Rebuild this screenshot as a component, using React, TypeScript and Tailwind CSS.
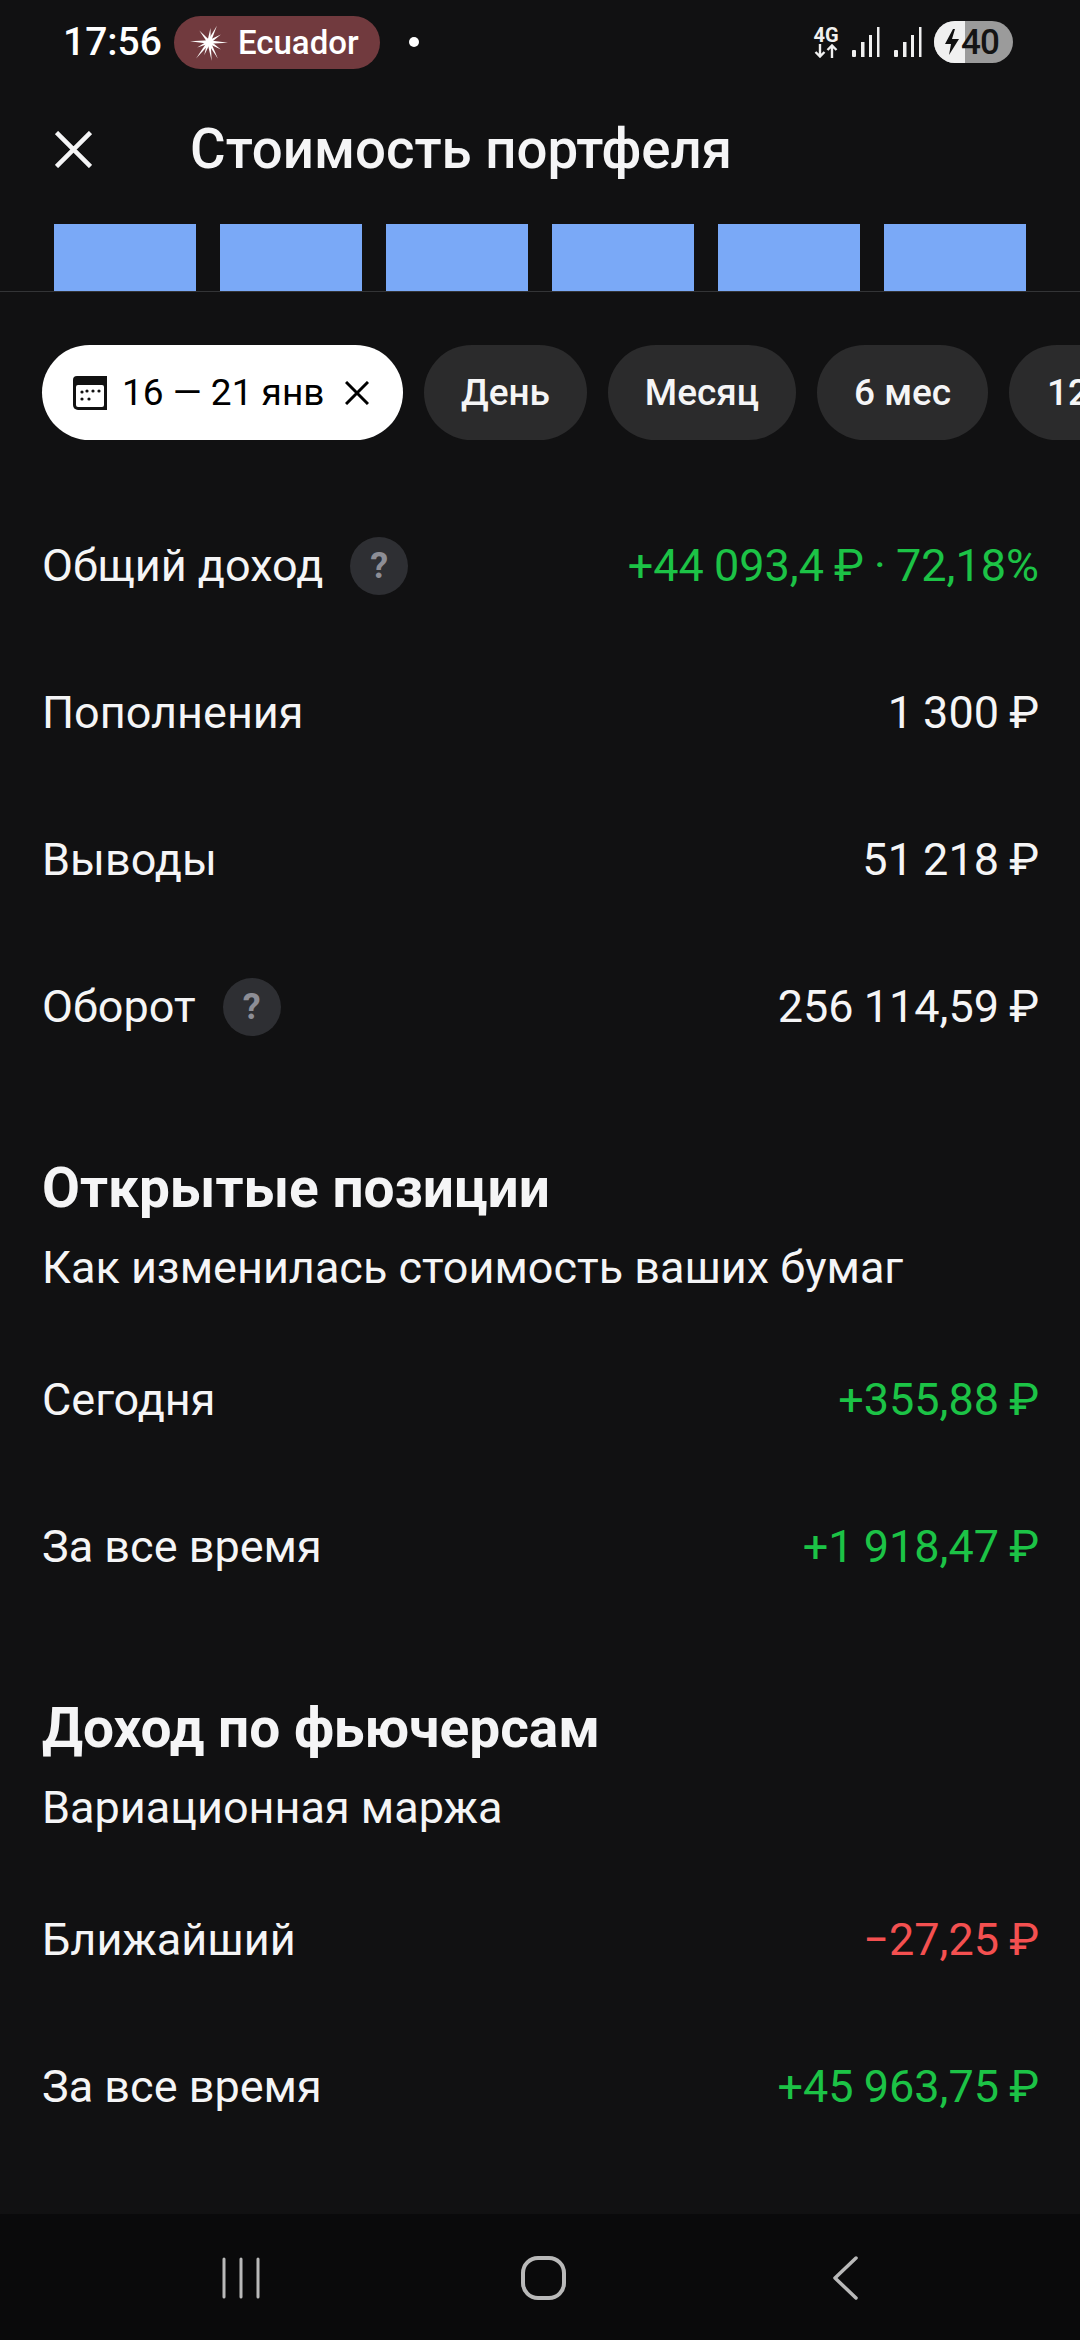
const rowsTop = [
  { label: "Общий доход", value: "+44 093,4 ₽ · 72,18%", color: "text-[#1cc346]", help: true },
  { label: "Пополнения", value: "1 300 ₽" },
  { label: "Выводы", value: "51 218 ₽" },
  { label: "Оборот", value: "256 114,59 ₽", help: true },
]

type RowProps = { label: string; value: string; color?: string; help?: boolean }

function Row({ label, value, color = "text-[#f5f5f6]", help }: RowProps) {
  return (
    <div className="flex h-[147px] items-center justify-between pl-[42px] pr-[41px] text-[45px] leading-none text-[#f5f5f6]">
      <div className="flex items-center gap-[27px]">
        <span>{label}</span>
        {help && (
          <span className="flex h-[58px] w-[58px] items-center justify-center rounded-full bg-[#2e2f33] text-[36px] font-bold text-[#8d8e96]">
            ?
          </span>
        )}
      </div>
      <span className={`[word-spacing:-1px] ${color}`}>{value}</span>
    </div>
  )
}

function Section({ title, sub }: { title: string; sub: string }) {
  return (
    <div className="px-[42px] text-[#f5f5f6]">
      <div className="text-[55px] font-bold leading-[64px]">{title}</div>
      <div className="mt-[22px] text-[45px] leading-[52px]">{sub}</div>
    </div>
  )
}

function Chip({ children, width }: { children: React.ReactNode; width: string }) {
  return (
    <div className={`flex h-[95px] shrink-0 items-center justify-center rounded-full bg-[#2b2b2c] text-[37px] font-medium leading-none text-[#f5f5f6] ${width}`}>
      {children}
    </div>
  )
}

function Burst() {
  const rays: [number, number][] = [
    [6, 14], [26, 18], [58, 14], [92, 19], [122, 14], [152, 19],
    [172, 19], [200, 14], [218, 21], [245, 13], [272, 19], [320, 15],
  ]
  return (
    <svg width="38" height="40" viewBox="-19 -20 38 40">
      {rays.map(([a, len]) => (
        <polygon key={a} points={`-1.700,0 0,${-len} 1.700,0`} fill="#fff" transform={`rotate(${a})`} />
      ))}
      <circle r="3.500" fill="#fff" />
    </svg>
  )
}

function Signal() {
  return (
    <svg width="28" height="30" viewBox="0 0 28 30" fill="#f0f0f0">
      <rect x="0" y="23" width="4" height="7" rx="1" />
      <rect x="9" y="15" width="3.500" height="15" />
      <rect x="17" y="8" width="3" height="22" />
      <rect x="25" y="0" width="2.500" height="30" />
    </svg>
  )
}

export default function App() {
  return (
    <div className="relative h-[2340px] w-[1080px] overflow-hidden bg-[#111112] font-['Roboto',sans-serif]">
      {/* status bar */}
      <div className="flex h-[84px] items-center justify-between pl-[63px] pr-[67px] text-white">
        <div className="flex items-center">
          <span className="text-[39px] font-medium leading-none">17:56</span>
          <div className="ml-[12px] flex h-[53px] w-[206px] items-center gap-[10px] rounded-full bg-[#713a3e] pl-[16px]">
            <Burst />
            <span className="text-[33px] font-medium leading-none">Ecuador</span>
          </div>
          <span className="ml-[29px] h-[10px] w-[10px] rounded-full bg-white" />
        </div>
        <div className="flex items-center">
          <div className="flex w-[24px] flex-col items-center text-[#f0f0f0]">
            <span className="text-[20px] font-bold leading-[17px]">4G</span>
            <svg width="24" height="14" viewBox="0 0 24 14" fill="none" stroke="#f0f0f0" strokeWidth="2.400">
              <path d="M6 0v12M1.500 8 6 12.500 10.500 8M18 14V2M13.500 6 18 1.500 22.500 6" />
            </svg>
          </div>
          <div className="ml-[14px]"><Signal /></div>
          <div className="ml-[14px]"><Signal /></div>
          <div className="relative ml-[12px] flex h-[42px] w-[79px] items-center overflow-hidden rounded-full bg-[#9b9b9b]">
            <div className="absolute inset-y-0 left-0 w-[31px] bg-[#f0f0f0]" />
            <svg className="relative ml-[10px]" width="16" height="26" viewBox="0 0 16 26" fill="#111">
              <path d="M9 0 1 15h6l-2 11 10-16H8l3-10z" />
            </svg>
            <span className="relative ml-[1px] text-[35px] font-medium leading-none tracking-[-1px] text-[#141414]">40</span>
          </div>
        </div>
      </div>

      {/* header */}
      <div className="flex h-[131px] items-center pl-[55px] text-[#f5f5f6]">
        <svg width="37" height="37" viewBox="0 0 37 37" stroke="#f5f5f6" strokeWidth="4.500" fill="none">
          <path d="M1.500 1.500 35.500 35.500M35.500 1.500 1.500 35.500" />
        </svg>
        <h1 className="ml-[98px] text-[54.6px] font-medium leading-none">Стоимость портфеля</h1>
      </div>

      {/* bars */}
      <div className="flex h-[77px] gap-[24px] border-b border-[#333436] pl-[54px] pt-[9px]">
        {[0, 1, 2, 3, 4, 5].map((i) => (
          <div key={i} className="h-[67px] w-[142px] bg-[#7aa9f7]" />
        ))}
      </div>

      {/* period chips */}
      <div className="mt-[53px] flex gap-[21px] overflow-hidden pl-[42px]">
        <div className="flex h-[95px] w-[361px] shrink-0 items-center rounded-full bg-white pl-[30px] text-[37px] text-black">
          <svg width="36" height="36" viewBox="0 0 36 36">
            <path d="M5 1h30v34H6a5 5 0 0 1-5-5V5a4 4 0 0 1 4-4z" fill="#111" />
            <rect x="4" y="10" width="28" height="22" rx="2" fill="#fff" />
            <g fill="#111">
              <circle cx="15" cy="16" r="1.600" /><circle cx="21" cy="16" r="1.600" /><circle cx="27" cy="16" r="1.600" />
              <circle cx="10" cy="17" r="1.600" /><circle cx="10" cy="24" r="1.600" /><circle cx="17" cy="24" r="1.600" />
            </g>
          </svg>
          <span className="ml-[14px] leading-none">16 — 21 янв</span>
          <svg className="ml-[21px]" width="24" height="24" viewBox="0 0 24 24" stroke="#000" strokeWidth="3" fill="none">
            <path d="M1 1 23 23M23 1 1 23" />
          </svg>
        </div>
        <Chip width="w-[163px]">День</Chip>
        <Chip width="w-[188px]">Месяц</Chip>
        <Chip width="w-[171px]">6 мес</Chip>
        <Chip width="px-[38px]">12 мес</Chip>
      </div>

      {/* totals */}
      <div className="mt-[52px]">
        {rowsTop.map((r) => (
          <Row key={r.label} {...r} />
        ))}
      </div>

      <div className="mt-[76px]">
        <Section title="Открытые позиции" sub="Как изменилась стоимость ваших бумаг" />
        <div className="mt-[32px]">
          <Row label="Сегодня" value="+355,88 ₽" color="text-[#1cc346]" />
          <Row label="За все время" value="+1 918,47 ₽" color="text-[#1cc346]" />
        </div>
      </div>

      <div className="mt-[76px]">
        <Section title="Доход по фьючерсам" sub="Вариационная маржа" />
        <div className="mt-[32px]">
          <Row label="Ближайший" value="−27,25 ₽" color="text-[#f45050]" />
          <Row label="За все время" value="+45 963,75 ₽" color="text-[#1cc346]" />
        </div>
      </div>

      {/* system nav */}
      <div className="absolute inset-x-0 bottom-0 h-[126px] bg-[#0a0a0b]">
        <svg className="absolute left-[222px] top-[42px]" width="640" height="44" viewBox="0 0 640 44" fill="none" stroke="#b9b9b9" strokeLinecap="round">
          <path d="M2 3v38M19 3v38M36 3v38" strokeWidth="3" />
          <rect x="301" y="2" width="41" height="40" rx="15" strokeWidth="4" />
          <path d="M634 2 613 22 634 42" strokeWidth="3.500" strokeLinejoin="round" />
        </svg>
      </div>
    </div>
  )
}
